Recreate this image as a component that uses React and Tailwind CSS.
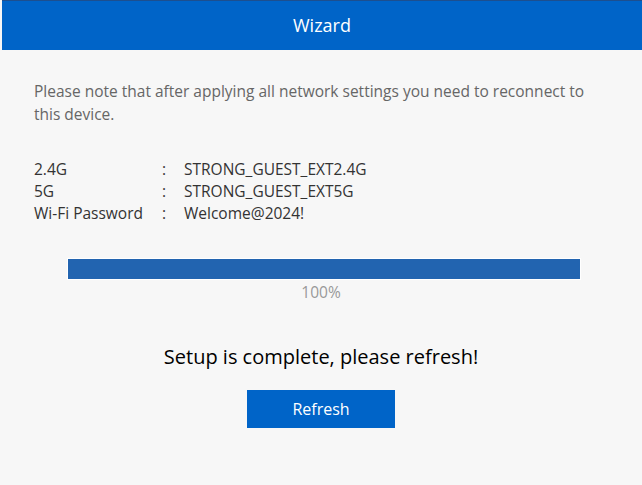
import React from 'react';

const networks = [
  { label: '2.4G', value: 'STRONG_GUEST_EXT2.4G' },
  { label: '5G', value: 'STRONG_GUEST_EXT5G' },
  { label: 'Wi-Fi Password', value: 'Welcome@2024!' },
];

const App = () => {
  const progress = 100;

  return (
    <div className="min-h-[485px] bg-[#f7f7f7] font-['Open_Sans','Noto_Sans',sans-serif]">
      {/* Header */}
      <header className="ml-[2px] h-[50px] border-t border-[#1d4f8f] bg-[#0064c8] flex items-center justify-center">
        <h1 className="text-[18px] text-white">Wizard</h1>
      </header>

      <main className="px-[34px] pt-[30px]">
        <p className="text-[15.5px] leading-[23px] text-[#666] pr-[20px]">
          Please note that after applying all network settings you need to reconnect to this device.
        </p>

        {/* Network summary */}
        <div className="mt-[32px] text-[15.5px] leading-[22px] text-[#333]">
          {networks.map((row) => (
            <div key={row.label} className="flex">
              <span className="w-[128px]">{row.label}</span>
              <span className="w-[22px]">:</span>
              <span>{row.value}</span>
            </div>
          ))}
        </div>

        {/* Progress */}
        <div className="mt-[34px] ml-[33px] mr-[27px] border border-white bg-white">
          <div className="h-[20px] bg-[#2264b0]" style={{ width: `${progress}%` }} />
        </div>
        <div className="mt-[1px] text-center text-[15.5px] text-[#999]">{progress}%</div>

        <div className="mt-[38px] text-center text-[20px] text-black">
          Setup is complete, please refresh!
        </div>

        <div className="mt-[18px] flex justify-center">
          <button className="w-[148px] h-[38px] bg-[#0064c8] text-white text-[16px]">
            Refresh
          </button>
        </div>
      </main>
    </div>
  );
};

export default App;
